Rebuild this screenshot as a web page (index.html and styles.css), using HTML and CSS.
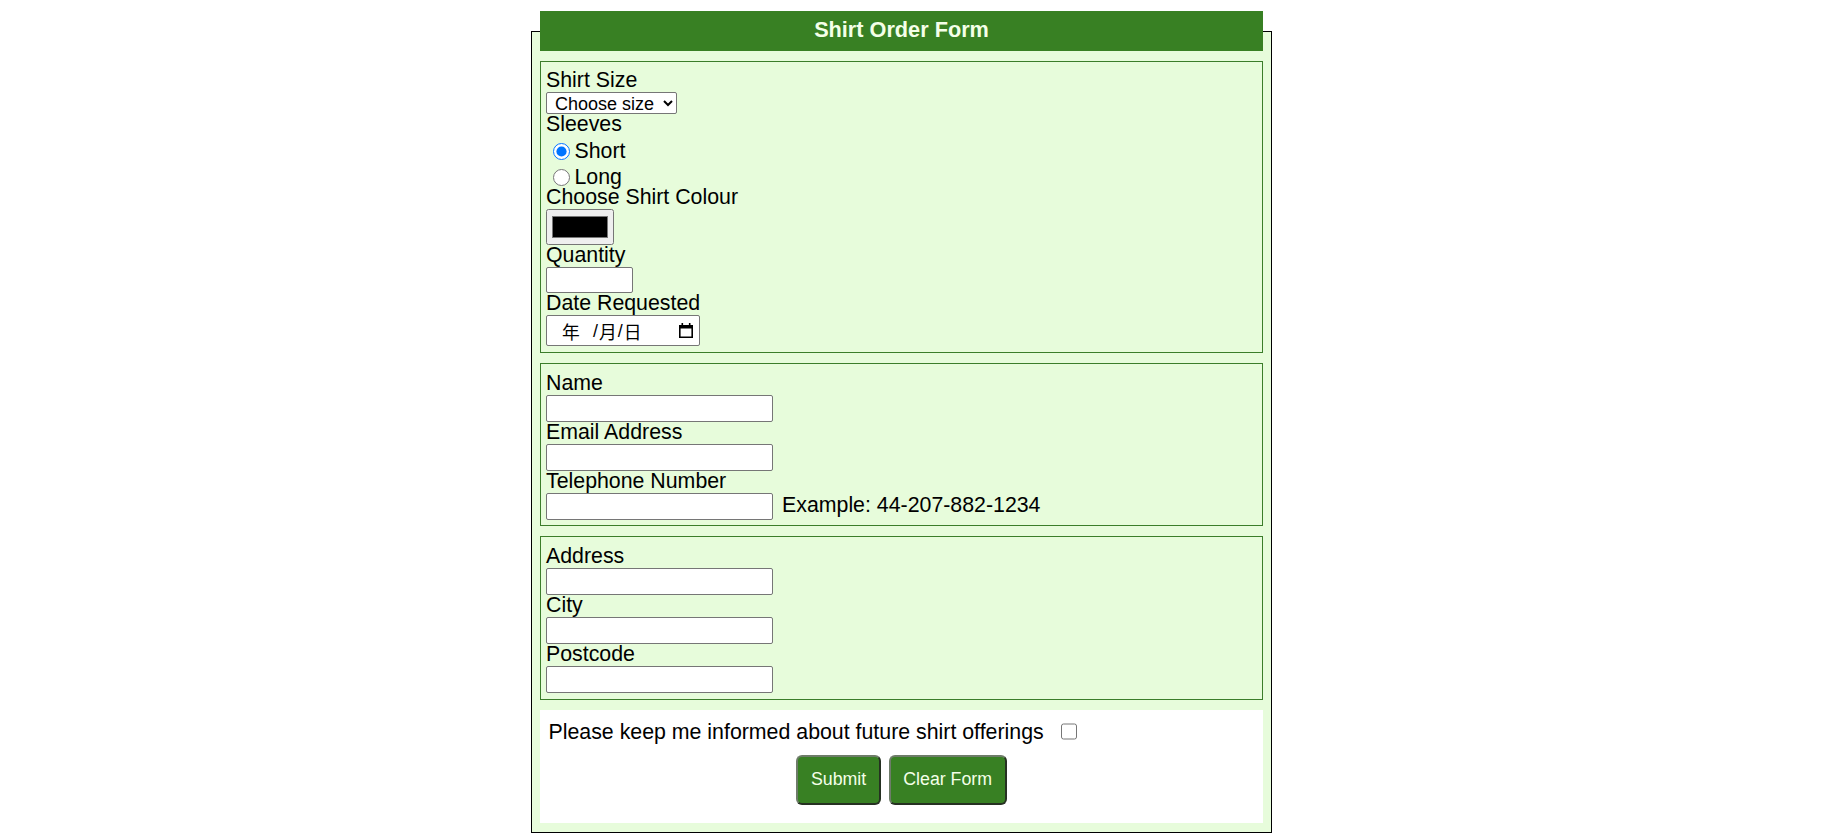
FILE: index.html
```html
<!DOCTYPE html>
<html lang="en">
<head>
<meta charset="utf-8">
<title>Shirt Order Form</title>
<link rel="stylesheet" href="styles.css">
</head>
<body>
<div class="page">
  <form class="order-form">
    <fieldset class="order">
      <legend class="order-title">Shirt Order Form</legend>
      <div class="sections">
        <fieldset class="section">
          <label class="field-label" for="size">Shirt Size</label>
          <select id="size" class="size-select">
            <option>Choose size</option>
            <option>Small</option>
            <option>Medium</option>
            <option>Large</option>
          </select>
          <div class="field-label">Sleeves</div>
          <label class="radio-row"><input type="radio" name="sleeves" class="radio" checked><span class="radio-text">Short</span></label>
          <label class="radio-row"><input type="radio" name="sleeves" class="radio"><span class="radio-text">Long</span></label>
          <label class="field-label" for="colour">Choose Shirt Colour</label>
          <input type="color" id="colour" class="colour-input" value="#000000">
          <label class="field-label" for="qty">Quantity</label>
          <input type="number" id="qty" class="text-input qty-input">
          <label class="field-label">Date Requested</label>
          <div class="date-input">
            <span class="dt-year">年</span><span class="dt-sep">/</span><span class="dt-part">月</span><span class="dt-sep">/</span><span class="dt-part">日</span>
            <svg class="dt-icon" width="14" height="15" viewBox="0 0 14 15" aria-hidden="true">
              <path d="M2.5 0h1.6v2H9.9V0h1.6v2H14v13H0V2h2.5zM1.6 5.4v8h10.8v-8z" fill="#000"/>
            </svg>
          </div>
        </fieldset>

        <fieldset class="section">
          <label class="field-label" for="name">Name</label>
          <input type="text" id="name" class="text-input wide-input">
          <label class="field-label" for="email">Email Address</label>
          <input type="email" id="email" class="text-input wide-input">
          <label class="field-label" for="tel">Telephone Number</label>
          <div class="tel-row">
            <input type="tel" id="tel" class="text-input wide-input">
            <span class="example">Example: 44-207-882-1234</span>
          </div>
        </fieldset>

        <fieldset class="section">
          <label class="field-label" for="address">Address</label>
          <input type="text" id="address" class="text-input wide-input">
          <label class="field-label" for="city">City</label>
          <input type="text" id="city" class="text-input wide-input">
          <label class="field-label" for="postcode">Postcode</label>
          <input type="text" id="postcode" class="text-input wide-input">
        </fieldset>

        <div class="extras">
          <label class="keep-row"><span>Please keep me informed about future shirt offerings</span><input type="checkbox" class="check"></label>
          <div class="actions">
            <button type="submit" class="btn">Submit</button>
            <button type="reset" class="btn">Clear Form</button>
          </div>
        </div>
      </div>
    </fieldset>
  </form>
</div>
</body>
</html>
```

FILE: styles.css
```css
* {
  box-sizing: border-box;
}

body {
  margin: 0;
  background: #ffffff;
  color: #000000;
  font-family: "Liberation Sans", Arial, sans-serif;
  font-size: 21.33px;
}

.page {
  width: 1803px;
  padding-top: 11px;
}

.order-form {
  margin: 0;
}

.order {
  width: 741px;
  margin: 0 auto;
  padding: 9.5px 8px 9px;
  border: 1px solid #000000;
  background: #e7fcdb;
  min-width: 0;
}

.order-title {
  width: 100%;
  height: 40px;
  padding: 0 0 2px;
  line-height: 38px;
  background: #388023;
  color: #f4ffe8;
  font-weight: bold;
  font-size: 21.7px;
  text-align: center;
}

.sections {
  display: flex;
  flex-direction: column;
  gap: 10px;
}

.section {
  margin: 0;
  padding: 8.6px 4px 5.8px 5px;
  border: 1px solid #3b7d2a;
  min-width: 0;
}

.field-label {
  display: block;
  height: 22px;
  line-height: 20px;
  padding-bottom: 2px;
}

.size-select {
  display: block;
  width: 131px;
  height: 22.3px;
  margin: 0;
  padding: 0 0 0 4px;
  font-family: "Liberation Sans", Arial, sans-serif;
  font-size: 18px;
  color: #000000;
  background-color: #ffffff;
  border: 1px solid #767676;
  border-radius: 2px;
}

.radio-row {
  display: flex;
  align-items: flex-start;
  height: 25.3px;
  padding-top: 7px;
}

.radio {
  width: 17px;
  height: 17px;
  margin: 0 5px 0 6.5px;
}

.radio-text {
  line-height: 16px;
}

.colour-input {
  display: block;
  width: 68px;
  height: 36px;
  margin: 0;
  padding: 1px 3px;
}

.colour-input::-webkit-color-swatch-wrapper {
  padding: 5px 2px;
}

.text-input {
  display: block;
  margin: 0;
  padding: 1px 3px;
  height: 27px;
  font-family: "Liberation Sans", Arial, sans-serif;
  font-size: 17.78px;
  background: #ffffff;
  border: 1px solid #767676;
  border-radius: 2px;
}

.qty-input {
  width: 86.5px;
  height: 26.5px;
}

.wide-input {
  width: 227px;
}

.date-input {
  display: flex;
  align-items: center;
  width: 154px;
  height: 30.7px;
  padding-left: 3px;
  background: #ffffff;
  border: 1px solid #767676;
  border-radius: 2px;
  font-family: "Liberation Sans", "Noto Sans CJK SC", sans-serif;
  font-size: 17.78px;
  line-height: 20px;
}

.dt-year {
  display: inline-block;
  width: 42px;
  text-align: center;
  font-family: "Noto Sans CJK SC", sans-serif;
}

.dt-part {
  font-family: "Noto Sans CJK SC", sans-serif;
}

.dt-sep {
  font-family: "Liberation Sans", Arial, sans-serif;
  padding: 0 1px;
}

.dt-icon {
  margin-left: auto;
  margin-right: 6.3px;
  display: block;
}

.tel-row {
  display: flex;
  align-items: baseline;
}

.example {
  margin-left: 9px;
  line-height: 20px;
}

.extras {
  background: #ffffff;
  padding: 10.7px 8.5px 18px;
}

.keep-row {
  display: flex;
  align-items: flex-start;
}

.check {
  width: 16.5px;
  height: 16.5px;
  margin: 2.7px 0 0 17px;
}

.actions {
  display: flex;
  justify-content: center;
  gap: 8px;
  margin-top: 9.2px;
}

.btn {
  margin: 0;
  padding: 12.5px;
  font-family: "Liberation Sans", Arial, sans-serif;
  font-size: 17.78px;
  line-height: normal;
  color: #f4ffe8;
  background: #388023;
  border: 2px solid;
  border-color: #6e7c69 #263122 #263122 #6e7c69;
  border-radius: 6px;
}
```
